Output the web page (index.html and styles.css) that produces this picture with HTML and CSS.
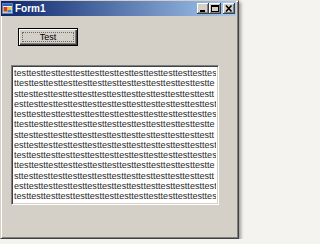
FILE: index.html
```html
<!DOCTYPE html>
<html>
<head>
<meta charset="utf-8">
<link rel="stylesheet" href="styles.css">
</head>
<body>
<div class="window">
  <div class="titlebar">
    <svg class="appicon" width="11" height="11" viewBox="0 0 11 11">
      <rect x="0.5" y="0.5" width="10" height="10" fill="#e8eef8" stroke="#6a7fb0"/>
      <rect x="1" y="1" width="9" height="2" fill="#2a5fc8"/>
      <rect x="1.5" y="4" width="4" height="4" fill="#e03a1e"/>
      <rect x="5.5" y="4" width="4" height="3" fill="#f4c21c"/>
      <rect x="5.5" y="7" width="4" height="2.5" fill="#3a86d8"/>
      <rect x="1.5" y="8" width="4" height="1.5" fill="#8ab04a"/>
    </svg>
    <span class="title">Form1</span>
    <div class="tbtns">
      <div class="tbtn">
        <svg width="12" height="11" viewBox="0 0 12 11"><rect x="3" y="7" width="5" height="2" fill="#000"/></svg>
      </div>
      <div class="tbtn">
        <svg width="12" height="11" viewBox="0 0 12 11"><rect x="2.5" y="2.5" width="7" height="6" fill="none" stroke="#000"/><rect x="2" y="2" width="8" height="2" fill="#000"/></svg>
      </div>
      <div class="tbtn close">
        <svg width="12" height="11" viewBox="0 0 12 11"><path d="M3 2.5 L8.5 8.5 M8.5 2.5 L3 8.5" stroke="#000" stroke-width="1.6" fill="none"/></svg>
      </div>
    </div>
  </div>
  <div class="client">
    <div class="button"><span class="focus">Test</span></div>
    <div class="textbox">
      <div class="line">testtesttesttesttesttesttesttesttesttesttesttesttesttes</div>
      <div class="line">ttesttesttesttesttesttesttesttesttesttesttesttesttestte</div>
      <div class="line">sttesttesttesttesttesttesttesttesttesttesttesttesttestt</div>
      <div class="line">esttesttesttesttesttesttesttesttesttesttesttesttesttest</div>
      <div class="line">testtesttesttesttesttesttesttesttesttesttesttesttesttes</div>
      <div class="line">ttesttesttesttesttesttesttesttesttesttesttesttesttestte</div>
      <div class="line">sttesttesttesttesttesttesttesttesttesttesttesttesttestt</div>
      <div class="line">esttesttesttesttesttesttesttesttesttesttesttesttesttest</div>
      <div class="line">testtesttesttesttesttesttesttesttesttesttesttesttesttes</div>
      <div class="line">ttesttesttesttesttesttesttesttesttesttesttesttesttestte</div>
      <div class="line">sttesttesttesttesttesttesttesttesttesttesttesttesttestt</div>
      <div class="line">esttesttesttesttesttesttesttesttesttesttesttesttesttest</div>
      <div class="line">testtesttesttesttesttesttesttesttesttesttesttesttesttes</div>
    </div>
  </div>
</div>
</body>
</html>
```
FILE: styles.css
```css
html, body {
  margin: 0;
  padding: 0;
  background: #f4f3f0;
}
.window {
  width: 239px;
  height: 239px;
  box-sizing: border-box;
  border: 1px solid;
  border-color: #d4d0c8 #404040 #404040 #d4d0c8;
  background: #d4d0c8;
  box-shadow: inset 1px 1px #ffffff, inset -1px -1px #808080, 2px 2px 3px rgba(0,0,0,0.35);
  display: flex;
  flex-direction: column;
  padding: 0 2px 2px 0;
  font-family: "Liberation Sans", Arial, sans-serif;
}
.titlebar {
  height: 15px;
  flex: none;
  background: linear-gradient(to right, #0a246a, #a6caf0);
  display: flex;
  align-items: center;
  padding: 0 1px 0 1px;
}
.appicon {
  flex: none;
  display: block;
}
.title {
  color: #ffffff;
  font-weight: bold;
  font-size: 10px;
  margin-left: 2px;
  line-height: 15px;
}
.tbtns {
  margin-left: auto;
  display: flex;
  align-items: center;
}
.tbtn {
  width: 12px;
  height: 11px;
  background: #d4d0c8;
  box-shadow: inset -1px -1px #404040, inset 1px 1px #ffffff, inset -2px -2px #808080;
}
.tbtn svg {
  display: block;
}
.tbtn.close {
  margin-left: 2px;
}
.client {
  flex: 1;
  display: flex;
  flex-direction: column;
  align-items: flex-start;
}
.button {
  margin: 12px 0 0 17px;
  width: 60px;
  height: 18px;
  box-sizing: border-box;
  border: 1px solid #000;
  background: #d4d0c8;
  box-shadow: inset 1px 1px #ffffff, inset -1px -1px #404040, inset -2px -2px #808080;
  display: flex;
  padding: 3px;
}
.focus {
  flex: 1;
  border: 1px dotted #6a6a6a;
  display: flex;
  align-items: center;
  justify-content: center;
  font-size: 9px;
  color: #000;
}
.textbox {
  margin: 19px 0 0 10px;
  width: 208px;
  height: 140px;
  box-sizing: border-box;
  background: #ffffff;
  border: 1px solid;
  border-color: #808080 #ffffff #ffffff #808080;
  box-shadow: inset 1px 1px #404040, inset -1px -1px #d4d0c8;
  padding: 2px 2px 0 2px;
  overflow: hidden;
}
.line {
  font-size: 9.1px;
  line-height: 10.25px;
  color: #2a2a2a;
  white-space: nowrap;
  overflow: hidden;
}
```
